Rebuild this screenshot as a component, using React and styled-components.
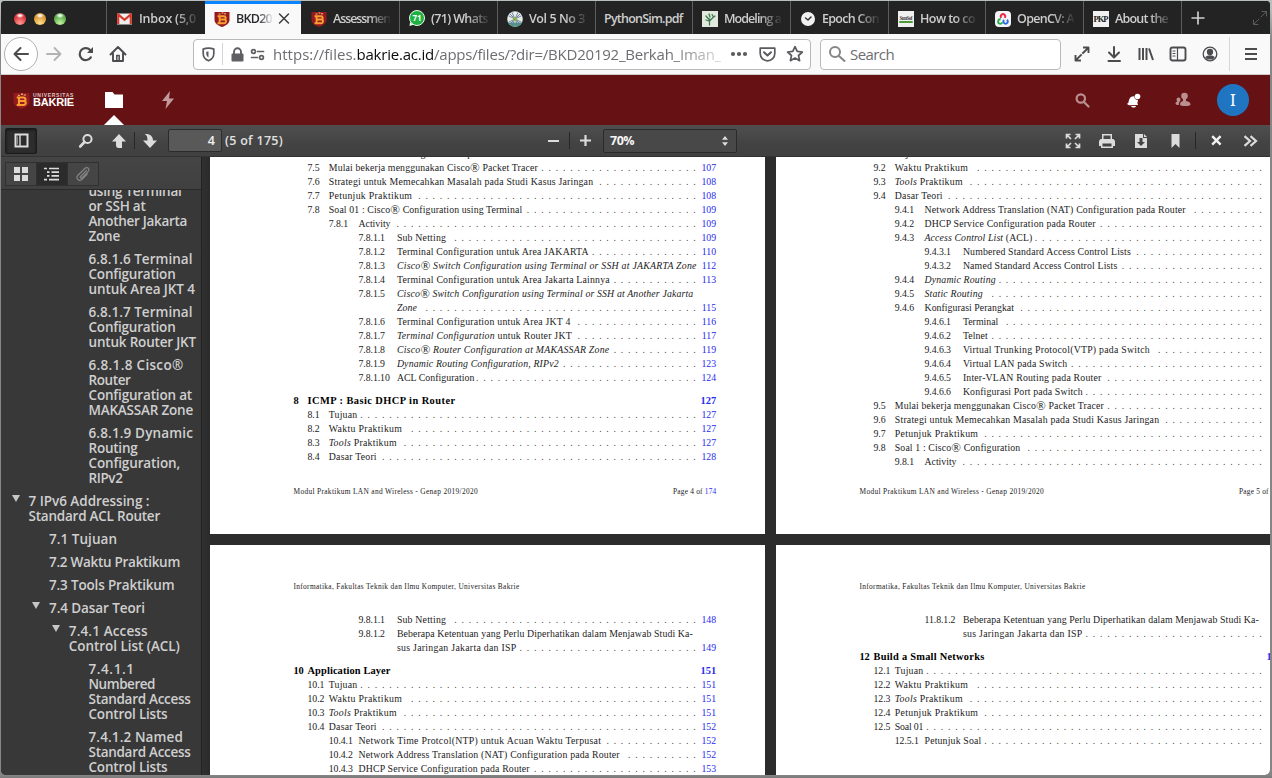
import React, { useLayoutEffect, useRef } from 'react';
import styled, { createGlobalStyle, css } from 'styled-components';

const Global = createGlobalStyle`
  * { box-sizing: border-box; }
  html, body { margin: 0; padding: 0; }
  body { width: 1272px; height: 778px; overflow: hidden;
    background: linear-gradient(#b9bfbc 0, #b9bfbc 8px, #868686 40px, #868686 775px, #7a7a7a 778px);
    font-family: "Open Sans", "Noto Sans", sans-serif; }
  svg { display: block; flex: none; }
`;

/* ---------- text set to a given measure ---------- */
const Measure = styled.span`
  display: inline-block; flex: none; white-space: pre; width: ${p => p.$w}px;
`;
function Fit({ w, children }) {
  const ref = useRef(null);
  useLayoutEffect(() => {
    const el = ref.current;
    el.style.letterSpacing = '0px';
    const natural = el.getBoundingClientRect().width;
    el.style.letterSpacing = (w - natural) / el.textContent.length + 'px';
  }, [w, children]);
  return <Measure $w={w}><span ref={ref}>{children}</span></Measure>;
}

/* ---------- window ---------- */
const Window = styled.div`
  width: 1269px; height: 774px; margin: 1px 0 0 1px; overflow: hidden;
  border-radius: 4px 4px 5px 5px; display: flex; flex-direction: column; background: #2c2c2c;
`;
const TabBar = styled.div`
  height: 33px; flex: none; display: flex; background: #232323;
`;
const Lights = styled.div`
  width: 105px; display: flex; gap: 8px; padding: 12px 0 0 13px; flex: none;
`;
const Light = styled.i`
  width: 12px; height: 12px; border-radius: 50%;
  background: radial-gradient(ellipse 4px 2.5px at 50% 22%, #fff 20%, transparent 100%),
    radial-gradient(circle at 50% 85%, ${p => p.$lo} 0, ${p => p.$c} 60%, ${p => p.$c} 100%);
`;
const Tab = styled.div`
  width: ${p => p.$w}px; flex: none; display: flex; align-items: center; padding: 2px 0 0 ${p => p.$pl || 10}px;
  border-left: 1px solid #5d5d5d; color: #cdcdcd; font-size: 12.5px; font-weight: 600; gap: ${p => p.$gap || 7}px;
  ${p => p.$active && css`
    background: #f9f9fa; color: #2a2a2e; border-left: 0; box-shadow: inset 0 3px #0a84ff; & + div { border-left-color: #232323; }
  `}
`;
const TabLabel = styled.span`
  width: ${p => p.$w}px; overflow: hidden; white-space: nowrap; line-height: 20px;
  ${p => !p.$full && css`mask-image: linear-gradient(to right, #000 62%, rgba(0,0,0,.08) 100%);`}
`;
const TabEnd = styled.div`
  flex: 1; border-left: 1px solid #5d5d5d; display: flex; align-items: center; padding-left: 8px; gap: 46px;
`;

const NavBar = styled.div`
  height: 41px; flex: none; background: #f9f9fa; border-bottom: 1px solid #d0cccc;
  display: flex; align-items: center; padding-left: 3px;
`;
const Back = styled.div`
  width: 34px; height: 34px; border-radius: 50%; border: 1px solid #b1b1b1; background: #fff;
  display: flex; align-items: center; justify-content: center;
`;
const Slot = styled.div`
  margin-left: ${p => p.$ml || 0}px; flex: none;
`;
const Field = styled.div`
  width: ${p => p.$w}px; height: 31px; margin-left: ${p => p.$ml}px; background: #fff; flex: none;
  border: 1px solid #b9b9bb; border-radius: 4px; display: flex; align-items: center;
  font-size: 15px; color: #6d6d72; line-height: 28px;
`;
const Host = styled.span`color: #0c0c0d;`;
const UrlText = styled.div`
  display: flex; margin-left: 8px; mask-image: linear-gradient(to right, #000 88%, rgba(0,0,0,.25) 100%);
`;
const Rule = styled.i`
  width: 1px; height: ${p => p.$h}px; margin-left: ${p => p.$ml}px; background: ${p => p.$c}; flex: none;
`;

/* ---------- site header ---------- */
const Header = styled.div`
  height: 50px; flex: none; background: #661214; display: flex; align-items: center; padding: 0 21px 0 12px;
`;
const Brand = styled.div`
  margin-left: 3px; display: flex; flex-direction: column; color: #fff; width: 42px; padding-bottom: 2px;
`;
const BrandTop = styled.span`
  font: 700 5px/6px "Liberation Sans", sans-serif; color: #e0c4c4;
`;
const BrandName = styled.span`
  font: 700 11px/9px "Liberation Sans", sans-serif;
`;
const ActiveApp = styled.div`
  margin-left: 29px; width: 20px; height: 50px; display: flex; flex-direction: column; justify-content: flex-end; align-items: center; gap: 7px;
`;
const Notch = styled.i`
  border: 10px solid transparent; border-top: 0; border-bottom-color: #fff;
`;
const Avatar = styled.div`
  width: 32px; height: 32px; margin-left: 26px; border-radius: 50%; background: #1f75c1; color: #fff;
  font: 400 17px/32px "Noto Sans", sans-serif; text-align: center;
`;
const Push = styled.div`flex: 1;`;

/* ---------- pdf toolbar ---------- */
const PdfBar = styled.div`
  height: 32px; flex: none; display: flex; align-items: center; padding: 0 12px 0 4px;
  background: linear-gradient(#4f4f4f, #434343 60%, #404040); border-bottom: 1px solid #333;
  color: #e0e0e0; font-size: 12.5px; font-weight: 600;
`;
const Toggle = styled.div`
  width: 32px; height: 26px; background: #2d2d2d; border: 1px solid #1b1b1b; border-radius: 2px;
  box-shadow: inset 0 1px 3px rgba(0,0,0,.5); display: flex; align-items: center; justify-content: center;
`;
const PageInput = styled.div`
  width: 54px; height: 23px; margin-left: 10px; border: 1px solid #2c2c2c; border-radius: 2px;
  background: #595959; line-height: 21px; text-align: right; padding-right: 6px; color: #f2f2f2;
`;
const Count = styled.div`margin-left: 3px; line-height: 20px; width: 60px;`;
const Zoom = styled.div`
  width: 134px; height: 24px; margin-left: 12px; border: 1px solid #2a2a2a; border-radius: 2px; background: #484848;
  display: flex; align-items: center; justify-content: space-between; padding: 0 8px 0 6px; color: #f5f5f5; font-weight: 700;
`;

/* ---------- body ---------- */
const Body = styled.div`flex: 1; min-height: 0; display: flex;`;
const Side = styled.div`
  width: 200px; flex: none; display: flex; flex-direction: column; background: #383838;
`;
const SideBar = styled.div`
  height: 33px; flex: none; background: linear-gradient(#454545, #404040); border-bottom: 1px solid #2a2a2a;
  padding: 5px 0 0 4px; display: flex;
`;
const SideBtn = styled.div`
  width: ${p => (p.$first ? 32 : 31)}px; height: 24px; border: 1px solid #303030; border-left-width: ${p => (p.$first ? 1 : 0)}px;
  display: flex; align-items: center; justify-content: center; background: ${p => (p.$on ? '#2b2b2b' : '#454545')};
`;
const Outline = styled.div`
  flex: 1; overflow: hidden; padding-top: 9px; display: flex; flex-direction: column; gap: 8px;
  font-size: 13.5px; font-weight: 600; line-height: 15px; color: #cfcfcf;
`;
const Node = styled.div`
  display: flex; align-items: flex-start; padding-left: ${p => p.$x - 19}px; flex: none;
  &:first-child { margin-top: -15px; }
`;
const Lines = styled.div`display: flex; flex-direction: column;`;
const Twisty = styled.i`
  width: 18px; height: 8px; flex: none; display: flex;
  &::before { content: ""; display: ${p => (p.$on ? 'block' : 'none')}; margin: 1px 0 0 1px;
    border: 4.5px solid transparent; border-bottom: 0; border-top: 7px solid #c6c6c6; height: 0; }
`;
const Gutter = styled.div`
  width: 9px; flex: none; background: linear-gradient(to right, #303030, #2b2b2b); border-left: 1px solid #222;
`;
const Sheets = styled.div`
  flex: 1; min-width: 0; display: grid; grid-template-columns: 555px 555px; grid-template-rows: 377px 230px; gap: 11px;
  overflow: hidden; background: #2c2c2c;
`;
const Sheet = styled.div`
  background: #fff; overflow: hidden; padding: ${p => p.$pt || 0}px 0 0 83.5px; color: #1c1c1c;
  font: 9.8px/13.95px "Liberation Serif", "Times New Roman", serif;
`;
const Contents = styled.div`margin-top: ${p => p.$mt}px;`;
const Row = styled.div`
  height: 13.97px; width: 422.6px; display: flex; white-space: nowrap;
  ${p => p.$bold && css`margin-top: 9.1px; font-weight: 700; font-size: 10.4px; color: #000;`}
`;
const Num = styled.span`
  padding-left: ${p => p.$x}px; width: ${p => p.$w}px; flex: none; letter-spacing: -0.08px;
`;
const Leader = styled.span`
  margin-left: auto; letter-spacing: 4.79px; color: #444; width: ${p => p.$n * 7.24}px; flex: none;
`;
const Page = styled.span`
  flex: none; text-align: right; color: #2a2af0; width: 15.6px; margin-left: ${p => (p.$push ? 'auto' : 0)};
`;
const Small = styled.div`
  display: flex; justify-content: space-between; width: 423px; font-size: 7.4px; line-height: 10px; margin-top: ${p => p.$mt || 0}px;
`;
const Blue = styled.span`color: #2a2af0;`;
const Reg = styled.span`font-size: 1.3em; line-height: 0; vertical-align: -0.06em;`;

const R = () => <Reg>®</Reg>;
const COL = { 0: [0, 14], 1: [14, 35.3], 2: [35.3, 65], 3: [65, 103.4] };

/* entry: [level, number, title, title width, page] */
function Entry({ e }) {
  const [lv, num, title, w, page] = e;
  const [x, tx] = COL[lv];
  const plain = lv === 0 || page === null;
  const n = plain ? 0 : Math.max(0, Math.floor((402.2 - tx - w - 3.8) / 7.24) + 1);
  return (
    <Row $bold={lv === 0}>
      <Num $x={x} $w={tx}>{num}</Num><Fit w={w}>{title}</Fit>
      {n > 0 && <Leader $n={n}>{'.'.repeat(n)}</Leader>}
      {page !== null && <Page $push={n === 0}>{page}</Page>}
    </Row>
  );
}
const Toc = ({ rows, mt }) => <Contents $mt={mt}>{rows.map((e, i) => <Entry key={i} e={e} />)}</Contents>;

const tools = <><i>Tools</i> Praktikum</>;
const nat = 'Network Address Translation (NAT) Configuration pada Router';
const dhcp = 'DHCP Service Configuration pada Router';
const mulai = <>Mulai bekerja menggunakan Cisco<R /> Packet Tracer</>;
const strategi = 'Strategi untuk Memecahkan Masalah pada Studi Kasus Jaringan';

const page4 = [
  [3, '7.4.6.6', 'Konfigurasi Port pada Switch', 120, '106'],
  [1, '7.5', mulai, 209, '107'],
  [1, '7.6', strategi, 264.5, '108'],
  [1, '7.7', 'Petunjuk Praktikum', 83.5, '108'],
  [1, '7.8', <>Soal 01 : Cisco<R /> Configuration using Terminal</>, 193.5, '109'],
  [2, '7.8.1', 'Activity', 32, '109'],
  [3, '7.8.1.1', 'Sub Netting', 49.2, '109'],
  [3, '7.8.1.2', 'Terminal Configuration untuk Area JAKARTA', 191.8, '110'],
  [3, '7.8.1.3', <i>Cisco<R /> Switch Configuration using Terminal or SSH at JAKARTA Zone</i>, 299.8, '112'],
  [3, '7.8.1.4', 'Terminal Configuration untuk Area Jakarta Lainnya', 213, '113'],
  [3, '7.8.1.5', <i>Cisco<R /> Switch Configuration using Terminal or SSH at Another Jakarta</i>, 296.5, null],
  [3, '', <i>Zone</i>, 20, '115'],
  [3, '7.8.1.6', 'Terminal Configuration untuk Area JKT 4', 173.8, '116'],
  [3, '7.8.1.7', <><i>Terminal Configuration</i> untuk Router JKT</>, 175, '117'],
  [3, '7.8.1.8', <i>Cisco<R /> Router Configuration at MAKASSAR Zone</i>, 212.5, '119'],
  [3, '7.8.1.9', <i>Dynamic Routing Configuration, RIPv2</i>, 161.8, '123'],
  [3, '7.8.1.10', 'ACL Configuration', 77.5, '124'],
  [0, '8', 'ICMP : Basic DHCP in Router', 148, '127'],
  [1, '8.1', 'Tujuan', 28.5, '127'],
  [1, '8.2', 'Waktu Praktikum', 73.5, '127'],
  [1, '8.3', tools, 68, '127'],
  [1, '8.4', 'Dasar Teori', 48, '128'],
];
const page5 = [
  [1, '9.1', 'Tujuan', 28.5, ''],
  [1, '9.2', 'Waktu Praktikum', 73.5, ''],
  [1, '9.3', tools, 68, ''],
  [1, '9.4', 'Dasar Teori', 48, ''],
  [2, '9.4.1', nat, 261.3, ''],
  [2, '9.4.2', dhcp, 171.3, ''],
  [2, '9.4.3', <><i>Access Control List</i> (ACL)</>, 108, ''],
  [3, '9.4.3.1', 'Numbered Standard Access Control Lists', 168, ''],
  [3, '9.4.3.2', 'Named Standard Access Control Lists', 154.5, ''],
  [2, '9.4.4', <i>Dynamic Routing</i>, 71.3, ''],
  [2, '9.4.5', <i>Static Routing</i>, 58.3, ''],
  [2, '9.4.6', 'Konfigurasi Perangkat', 89.5, ''],
  [3, '9.4.6.1', 'Terminal', 35.5, ''],
  [3, '9.4.6.2', 'Telnet', 25, ''],
  [3, '9.4.6.3', 'Virtual Trunking Protocol(VTP) pada Switch', 187, ''],
  [3, '9.4.6.4', 'Virtual LAN pada Switch', 104.5, ''],
  [3, '9.4.6.5', 'Inter-VLAN Routing pada Router', 138.5, ''],
  [3, '9.4.6.6', 'Konfigurasi Port pada Switch', 120, ''],
  [1, '9.5', mulai, 209, ''],
  [1, '9.6', strategi, 264.5, ''],
  [1, '9.7', 'Petunjuk Praktikum', 83.5, ''],
  [1, '9.8', <>Soal 1 : Cisco<R /> Configuration</>, 125.5, ''],
  [2, '9.8.1', 'Activity', 32, ''],
];
const beberapa = 'Beberapa Ketentuan yang Perlu Diperhatikan dalam Menjawab Studi Ka-';
const page6 = [
  [3, '9.8.1.1', 'Sub Netting', 49.2, '148'],
  [3, '9.8.1.2', beberapa, 296, null],
  [3, '', 'sus Jaringan Jakarta dan ISP', 119.7, '149'],
  [0, '10', 'Application Layer', 83, '151'],
  [1, '10.1', 'Tujuan', 28.5, '151'],
  [1, '10.2', 'Waktu Praktikum', 73.5, '151'],
  [1, '10.3', tools, 68, '151'],
  [1, '10.4', 'Dasar Teori', 48, '152'],
  [2, '10.4.1', 'Network Time Protcol(NTP) untuk Acuan Waktu Terpusat', 242.7, '152'],
  [2, '10.4.2', nat, 261.3, '152'],
  [2, '10.4.3', dhcp, 171.3, '153'],
];
const page7 = [
  [3, '11.8.1.2', beberapa, 296, null],
  [3, '', 'sus Jaringan Jakarta dan ISP', 119.7, ''],
  [0, '12', 'Build a Small Networks', 111, '173'],
  [1, '12.1', 'Tujuan', 28.5, ''],
  [1, '12.2', 'Waktu Praktikum', 73.5, ''],
  [1, '12.3', tools, 68, ''],
  [1, '12.4', 'Petunjuk Praktikum', 83.5, ''],
  [1, '12.5', 'Soal 01', 28.5, ''],
  [2, '12.5.1', 'Petunjuk Soal', 57, ''],
];

/* outline: [x, expandable, [text, width]...] */
const outline = [
  [88.5, 0, ['using Terminal', 93], ['or SSH at', 57], ['Another Jakarta', 98.5], ['Zone', 31.5]],
  [88.5, 0, ['6.8.1.6 Terminal', 104], ['Configuration', 87], ['untuk Area JKT 4', 106.5]],
  [88.5, 0, ['6.8.1.7 Terminal', 104], ['Configuration', 87], ['untuk Router JKT', 107.5]],
  [88.5, 0, ['6.8.1.8 Cisco®', 95], ['Router', 42], ['Configuration at', 103.5], ['MAKASSAR Zone', 104.5]],
  [88.5, 0, ['6.8.1.9 Dynamic', 104.5], ['Routing', 49], ['Configuration,', 91.5], ['RIPv2', 34]],
  [28.5, 1, ['7 IPv6 Addressing :', 121], ['Standard ACL Router', 131.5]],
  [49, 0, ['7.1 Tujuan', 68]],
  [49, 0, ['7.2 Waktu Praktikum', 131]],
  [49, 0, ['7.3 Tools Praktikum', 125.5]],
  [49, 1, ['7.4 Dasar Teori', 96]],
  [68.8, 1, ['7.4.1 Access', 79], ['Control List (ACL)', 111]],
  [88.5, 0, ['7.4.1.1', 46], ['Numbered', 66.5], ['Standard Access', 102], ['Control Lists', 79]],
  [88.5, 0, ['7.4.1.2 Named', 94.5], ['Standard Access', 102], ['Control Lists', 79]],
];

/* ---------- drawings ---------- */
const Svg = ({ w = 16, h = w, vb, s = 'none', f = 'none', sw = 1.8, children }) => (
  <svg width={w} height={h} viewBox={vb || `0 0 ${w} ${h}`} fill={f} stroke={s} strokeWidth={sw} strokeLinecap="round" strokeLinejoin="round">{children}</svg>
);
const Shield = ({ w = 16 }) => (
  <Svg w={w} vb="0 0 16 16">
    <path d="M.5 1h15v8c0 3.500-3.500 5.500-7.500 7C4 14.500.5 12.500.5 9z" fill="#951a20" />
    <path d="M3.500 5.200h6.300c2.500 0 2.500 3 .6 3.300 2.300.4 2.100 3.700-.6 3.700H3.500M5.600 5.200v7M5.600 8.500h4.800" stroke="#f7a032" strokeWidth="1.900" strokeLinecap="butt" />
    <path d="M5 3h1M8 2h1M10.500 2.800h1.200" stroke="#ffd27a" strokeWidth="1" />
  </Svg>
);
const G = '#4c4c4f';
const L = '#dcdcdc';
const journal = 'Modul Praktikum LAN and Wireless - Genap 2019/2020';
const faculty = 'Informatika, Fakultas Teknik dan Ilmu Komputer, Universitas Bakrie';

export default function App() {
  return (
    <>
      <Global />
      <Window>
        <TabBar>
          <Lights>
            <Light $c="#e0383e" $lo="#ff9a94" /><Light $c="#dd9a3a" $lo="#ffe08a" /><Light $c="#5fae4c" $lo="#c4f3a2" />
          </Lights>
          <Tab $w={99}>
            <Svg w={15} h={12}><path d="M0 .5h15v11H0z" fill="#eee" /><path d="M1.200 11V1.500l6.300 5.300 6.300-5.300V11" stroke="#d6392c" strokeWidth="2.200" strokeLinecap="butt" strokeLinejoin="miter" /></Svg>
            <TabLabel $w={59}><Fit w={57}>Inbox (5,0</Fit></TabLabel>
          </Tab>
          <Tab $w={96} $active $pl={9} $gap={6}>
            <Shield /><TabLabel $w={36}><Fit w={36}>BKD20</Fit></TabLabel>
            <Svg w={13} s="#3c3c3c" sw={1.500}><path d="M1.500 2l9 9M10.500 2l-9 9" /></Svg>
          </Tab>
          <Tab $w={98} $pl={9} $gap={6}><Shield /><TabLabel $w={57}><Fit w={57}>Assessmen</Fit></TabLabel></Tab>
          <Tab $w={98} $pl={9} $gap={6}>
            <svg width="16" height="17" viewBox="0 0 16 17"><circle cx="8" cy="8" r="7.500" fill="#1fb141" stroke="#e8fbe8" strokeWidth="1" /><path d="M1 12L.5 16l4-1.200z" fill="#e8fbe8" /><text x="8" y="11" fontSize="8" fontWeight="700" fill="#fff" textAnchor="middle" fontFamily="Open Sans, sans-serif">71</text></svg>
            <TabLabel $w={58}><Fit w={57}>(71) Whats</Fit></TabLabel>
          </Tab>
          <Tab $w={98} $pl={9} $gap={6}>
            <Svg><circle cx="8" cy="8" r="7.800" fill="#e5ece4" /><path d="M1 11.500a8 8 0 0014 0" fill="#4f9c86" /><path d="M3 3l10 10M13 3L3 13M5 1.500l6 13M11 1.500l-6 13M2 5l12 6M14 5L2 11" stroke="#6874a8" strokeWidth=".9" /><path d="M6 6h4v4H6z" fill="#8caf54" /></Svg>
            <TabLabel $w={58}><Fit w={56}>Vol 5 No 3</Fit></TabLabel>
          </Tab>
          <Tab $w={97} $pl={8}><TabLabel $w={80} $full><Fit w={78.500}>PythonSim.pdf</Fit></TabLabel></Tab>
          <Tab $w={98} $pl={9} $gap={6}>
            <Svg><path d="M0 0h16v16H0z" fill="#e3e8df" /><path d="M7.500 14V8M7.500 9L4 5M7.500 10l4-4M8 6L7 3M4 9l3 1M10 3.500l1.500 2.500L13 5" stroke="#39794b" strokeWidth="1.300" /></Svg>
            <TabLabel $w={57}><Fit w={57}>Modeling a</Fit></TabLabel>
          </Tab>
          <Tab $w={98} $pl={9} $gap={6}>
            <Svg><circle cx="8" cy="8" r="7" fill="#f1f1f1" /><path d="M5.500 7L8 9l3-3" stroke="#333" strokeWidth="1.500" /></Svg>
            <TabLabel $w={57}><Fit w={57}>Epoch Con</Fit></TabLabel>
          </Tab>
          <Tab $w={97} $pl={9} $gap={6}>
            <Svg><path d="M0 0h16v16H0z" fill="#f0f0f0" /><text x="8" y="9" fontSize="5.200" fontWeight="700" fill="#444" textAnchor="middle" textLength="13" fontFamily="Liberation Serif, serif">SunSof</text><path d="M2 11h12" stroke="#4f9a38" strokeWidth="2" /></Svg>
            <TabLabel $w={56}><Fit w={55}>How to co</Fit></TabLabel>
          </Tab>
          <Tab $w={98} $pl={9} $gap={6}>
            <Svg><rect width="16" height="16" rx="4" fill="#f5f5f7" /><path d="M6.300 6.800a2.200 2.200 0 113.400 0" stroke="#e8284b" strokeWidth="1.900" strokeLinecap="butt" /><path d="M5.700 8.300a2.200 2.200 0 101.700 2.900" stroke="#24b14c" strokeWidth="1.900" strokeLinecap="butt" /><path d="M9 9a2.200 2.200 0 103-.2" stroke="#2a6bea" strokeWidth="1.900" strokeLinecap="butt" /></Svg>
            <TabLabel $w={57}><Fit w={57}>OpenCV: A</Fit></TabLabel>
          </Tab>
          <Tab $w={98} $pl={9} $gap={6}>
            <Svg><path d="M0 0h16v16H0z" fill="#f2f2f2" /><text x="8" y="11" fontSize="8.500" fontWeight="700" fill="#222" textAnchor="middle" textLength="15" fontFamily="Liberation Serif, serif">PKP</text></Svg>
            <TabLabel $w={56}><Fit w={53}>About the</Fit></TabLabel>
          </Tab>
          <TabEnd>
            <Svg w={16} s="#cfcfcf" sw={1.700}><path d="M8 1.500v13M1.500 8h13" strokeLinecap="butt" /></Svg>
            <Svg w={16} s="#5c5c5c" sw={1}><path d="M9 7l5-5M10 1.500h4.500V6M7 9l-5 5M1.500 10v4.500H6" /></Svg>
          </TabEnd>
        </TabBar>

        <NavBar>
          <Back><Svg w={18} s={G} sw={2}><path d="M16 9H2.500M8.500 3l-6 6 6 6" /></Svg></Back>
          <Slot $ml={7}><Svg w={18} s="#b3b3b5" sw={1.900}><path d="M2 9h13.500M9.500 3l6 6-6 6" /></Svg></Slot>
          <Slot $ml={14}><Svg w={18} s={G} sw={2.200}><path d="M13.800 12.300A6 6 0 1113.500 5.500" /><path d="M16 2v6h-6z" fill={G} stroke="none" /></Svg></Slot>
          <Slot $ml={14}><Svg w={18} s={G} sw={1.900}><path d="M1.500 9.500L9 2l7.500 7.500M4 8.500V16h10V8.500" /><path d="M7.800 15.500v-5h2.400v5" strokeWidth="1.500" /></Svg></Slot>
          <Field $w={618} $ml={66}>
            <Slot $ml={7}><Svg w={15} s="#5a5a5e" sw={1.700}><path d="M7.500 1.200c2 0 3.800.3 5.300.9v4.500c0 3.300-2 6-5.300 7.200-3.300-1.200-5.300-3.900-5.300-7.200V2.100c1.500-.6 3.300-.9 5.300-.9z" /><path d="M7.500 4.500v6C6 9.600 5.300 8 5.300 6.500V4.700z" fill="#5a5a5e" stroke="none" /></Svg></Slot>
            <Rule $h={22} $ml={6} $c="#d5d5d7" />
            <Slot $ml={8}><Svg w={13} h={15}><path d="M3 7V4.800a3.500 3.500 0 017 0V7" stroke="#5f5f63" strokeWidth="1.900" /><rect x="0.500" y="6.500" width="12" height="8" rx="1" fill="#5f5f63" /></Svg></Slot>
            <Slot $ml={6}><Svg w={15} h={13} s="#5f5f63" sw={1.700}><circle cx="3.500" cy="3.500" r="1.900" /><path d="M7.500 3.500h6M1.500 9.500h6" /><circle cx="11.500" cy="9.500" r="1.900" /></Svg></Slot>
            <UrlText><Fit w={83.500}>https://files.</Fit><Host><Fit w={77.500}>bakrie.ac.id</Fit></Host><Fit w={287}>/apps/files/?dir=/BKD20192_Berkah_Iman_</Fit></UrlText>
            <Slot $ml={9}><Svg w={18} h={6} f="#5a5a5e"><circle cx="3" cy="3" r="2.100" /><circle cx="9" cy="3" r="2.100" /><circle cx="15" cy="3" r="2.100" /></Svg></Slot>
            <Slot $ml={11}><Svg w={17} h={15} s="#5a5a5e" sw={1.700}><path d="M1.200 1.200h14.600v5.300a7.300 7.300 0 01-14.600 0z" /><path d="M5 5.200l3.500 3.300L12 5.200" strokeWidth="2" /></Svg></Slot>
            <Slot $ml={10}><Svg w={18} s="#5a5a5e" sw={1.700}><path d="M9 1.600l2.200 4.800 5.200.6-3.900 3.500 1.100 5.200L9 13.100l-4.600 2.600 1.100-5.200L1.600 7l5.200-.6z" /></Svg></Slot>
          </Field>
          <Field $w={241} $ml={9}>
            <Slot $ml={7}><Svg w={18} s="#858588" sw={2}><circle cx="7" cy="7" r="5" /><path d="M11 11l5.500 5" /></Svg></Slot>
            <Slot $ml={4}><Fit w={44}>Search</Fit></Slot>
          </Field>
          <Slot $ml={12}><Svg w={18} s={G} sw={1.900}><path d="M11 2.500h4.500V7M15 3l-5 5M7 15.500H2.500V11M3 15l5-5" strokeLinecap="square" /></Svg></Slot>
          <Slot $ml={14}><Svg w={18} s={G} sw={2}><path d="M9 2v10M4 7.500l5 5 5-5M3.500 16h11.500" /></Svg></Slot>
          <Slot $ml={14}><Svg w={18} s={G} sw={2}><path d="M2.500 3v12M6 3v12M9.500 3v12M12 3.500L16 15" strokeLinecap="butt" /></Svg></Slot>
          <Slot $ml={14}><Svg w={18} s={G} sw={1.900}><rect x="1.500" y="2.500" width="15" height="13" rx="2" /><path d="M8.500 3v12M4 6h2M4 8.500h2M4 11h2" strokeWidth="1.200" /></Svg></Slot>
          <Slot $ml={14}><Svg w={18} s={G} sw={1.300}><circle cx="9" cy="9" r="6.800" /><circle cx="9" cy="7" r="2.500" fill={G} /><path d="M5 12.300c1-1.800 7-1.800 8 0-1.500 2.200-6.500 2.200-8 0z" fill={G} /></Svg></Slot>
          <Rule $h={34} $ml={10} $c="#d7d7db" />
          <Slot $ml={13}><Svg w={16} s={G} sw={1.800}><path d="M2 3h12M2 8h12M2 13h12" strokeLinecap="butt" /></Svg></Slot>
        </NavBar>

        <Header>
          <Shield w={17} />
          <Brand>
            <BrandTop><Fit w={41}>UNIVERSITAS</Fit></BrandTop>
            <BrandName><Fit w={41}>BAKRIE</Fit></BrandName>
          </Brand>
          <ActiveApp>
            <Svg w={18} h={16} f="#fff"><path d="M0 0h7.500l2 2.500H18V16H0z" /></Svg>
            <Notch />
          </ActiveApp>
          <Slot $ml={37}><Svg w={14} h={20} f="#c29a9b"><path d="M9 1L1 11h5l-1.500 8L13 8.500H8z" /></Svg></Slot>
          <Push />
          <Slot><Svg w={15} s="#bb8f90" sw={2.200}><circle cx="5.800" cy="5.500" r="4.200" /><path d="M9 9l4.500 4.500" /></Svg></Slot>
          <Slot $ml={36}><Svg w={15} f="#fff"><path d="M1 11l1.500-1.500C3 6 4 3 8.200 3.200c.2 2.800 1.500 3.600 3.800 3.800-.2 2-.8 2.600-.5 3.500L12 12l-9 .2zM5 13h5c-.5 2-4 2-5 0z" /><circle cx="11.500" cy="3.500" r="2.800" /></Svg></Slot>
          <Slot $ml={34}><Svg w={16} f="#bb8f90"><circle cx="9.500" cy="4" r="3.300" /><path d="M8 6h3v3c3 .8 4.500 1.500 4.500 3.500 0 2-10.500 2-10.500 0 0-2 1-2.800 3-3.500zM3.500 5.500a2 2 0 012 2c0 1-.4 1.500-.7 2C4 10.500 3.500 12 4 13c-2 0-3.500-.3-3.500-1.500S1.500 10 2.300 9.500c-.5-.6-.8-1.200-.8-2a2 2 0 012-2z" /></Svg></Slot>
          <Avatar>I</Avatar>
        </Header>

        <PdfBar>
          <Toggle><Svg w={15} s={L} sw={2}><path d="M1.500 1.500h12v12h-12z" strokeLinejoin="miter" /><path d="M6 2v11" strokeWidth="1.400" /><path d="M3 3.500h1v8H3z" fill="#888" stroke="none" /></Svg></Toggle>
          <Slot $ml={41}><Svg w={16} s={L} sw={2}><circle cx="9.500" cy="6" r="4.100" /><path d="M6.500 9l-4.300 4.500" strokeWidth="2.600" /></Svg></Slot>
          <Slot $ml={17}><Svg w={16} f={L}><path d="M8 1l7 7.500h-4V15H7.500C5.500 15 5 13 5 12V8.500H1z" /></Svg></Slot>
          <Rule $h={17} $ml={7} $c="#262626" />
          <Slot $ml={7}><Svg w={16} f={L}><path d="M8 15L1 7.500h4.500C5.500 4 5 2 2.500 1 8 .5 11 3 11 7.500h4z" /></Svg></Slot>
          <PageInput>4</PageInput>
          <Count><Fit w={58}>(5 of 175)</Fit></Count>
          <Slot $ml={263}><Svg w={11} s={L} sw={2.200}><path d="M0 6h11" strokeLinecap="butt" /></Svg></Slot>
          <Rule $h={17} $ml={10} $c="#262626" />
          <Slot $ml={10}><Svg w={11} s={L} sw={2.200}><path d="M0 5.500h11M5.500 0v11" strokeLinecap="butt" /></Svg></Slot>
          <Zoom><Fit w={24}>70%</Fit><Svg w={6} h={10} f={L}><path d="M3 0l3 3.800H0zM3 10l3-3.800H0z" /></Svg></Zoom>
          <Push />
          <Slot><Svg w={16} s={L} sw={1.700}><path d="M1.500 5.500v-4h4M10.500 1.500h4v4M14.500 10.500v4h-4M5.500 14.500h-4v-4M2 2l4 4M14 2l-4 4M14 14l-4-4M2 14l4-4" strokeLinejoin="miter" strokeLinecap="butt" /></Svg></Slot>
          <Slot $ml={18}><Svg w={16} f={L}><path d="M3 6V1h10v5h1.500L16 8v5h-2v2H2v-2H0V8l1.500-2zm1.500-3.500V6h7V2.500zM3.500 10.500v3h9v-3z" fillRule="evenodd" /></Svg></Slot>
          <Slot $ml={18}><Svg w={16} f={L}><path d="M2 1h8v4h4v10H2zM6.500 5v4H4l4 4 4-4H9.500V5z" fillRule="evenodd" /><path d="M11 1l3 3h-3z" /></Svg></Slot>
          <Slot $ml={22}><Svg w={9} h={14} f={L}><path d="M.5 0h8v14l-4-4-4 4z" /></Svg></Slot>
          <Rule $h={17} $ml={15} $c="#262626" />
          <Slot $ml={15}><Svg w={11} s="#f2f2f2" sw={2.400}><path d="M1.200 1.200l8.400 8.400M9.600 1.200L1.200 9.600" strokeLinecap="butt" /></Svg></Slot>
          <Slot $ml={21}><Svg w={15} h={12} s={L} sw={2.200}><path d="M1.500 1.200L7 6l-5.500 4.800M7.500 1.200L13 6l-5.500 4.800" strokeLinecap="butt" strokeLinejoin="miter" /></Svg></Slot>
        </PdfBar>

        <Body>
          <Side>
            <SideBar>
              <SideBtn $first><Svg w={14} h={14} f={L}><path d="M0 0h6v6H0zM8 0h6v6H8zM0 8h6v6H0zM8 8h6v6H8z" /></Svg></SideBtn>
              <SideBtn $on><Svg w={16} h={14} s={L} sw={1.700}><path d="M0 1.500h3M5 1.500h10M3 5.200h2.500M7.500 5.200H15M3 8.900h2.500M7.500 8.900H15M0 12.600h3M5 12.600h10" strokeLinecap="butt" /></Svg></SideBtn>
              <SideBtn><Svg w={16} s="#858585" sw={1.200}><path d="M11.500 4.500l-6 6c-1 1.200.4 2.300 1.400 1.300l6.400-6.500c2-2.400-1-5-3.300-3L3 9.200c-2.700 3 .8 6.800 3.800 4.300l5.500-5.500" /></Svg></SideBtn>
            </SideBar>
            <Outline>
              {outline.map(([x, on, ...lines], i) => (
                <Node key={i} $x={x}>
                  <Twisty $on={on} />
                  <Lines>{lines.map(([t, w]) => <Fit key={t} w={w}>{t}</Fit>)}</Lines>
                </Node>
              ))}
            </Outline>
          </Side>
          <Gutter />
          <Sheets>
            <Sheet>
              <Toc mt={-9.700} rows={page4} />
              <Small $mt={23.400}><Fit w={184.500}>{journal}</Fit><Fit w={43.500}>Page 4 of <Blue>174</Blue></Fit></Small>
            </Sheet>
            <Sheet>
              <Toc mt={-9.700} rows={page5} />
              <Small $mt={18.600}><Fit w={184.500}>{journal}</Fit><Fit w={43.500}>Page 5 of <Blue>174</Blue></Fit></Small>
            </Sheet>
            <Sheet $pt={36.500}>
              <Small><Fit w={226}>{faculty}</Fit></Small>
              <Toc mt={21.900} rows={page6} />
            </Sheet>
            <Sheet $pt={36.500}>
              <Small><Fit w={226}>{faculty}</Fit></Small>
              <Toc mt={21.900} rows={page7} />
            </Sheet>
          </Sheets>
        </Body>
      </Window>
    </>
  );
}
